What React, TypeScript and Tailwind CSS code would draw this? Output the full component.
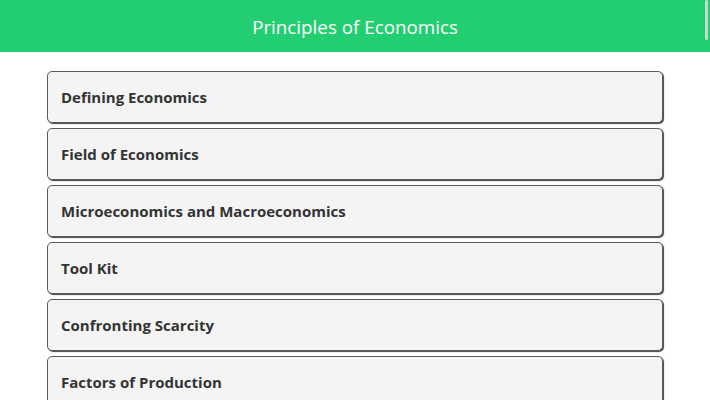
const topics = [
  "Defining Economics",
  "Field of Economics",
  "Microeconomics and Macroeconomics",
  "Tool Kit",
  "Confronting Scarcity",
  "Factors of Production",
];

export default function App() {
  return (
    <div className="relative h-[400px] overflow-hidden bg-white font-['Open_Sans',sans-serif]">
      <header className="flex h-[52px] items-center justify-center bg-[#23cd72] pt-[2px]">
        <h1 className="text-[18.8px] text-white">Principles of Economics</h1>
      </header>
      <div className="absolute right-[2px] top-0 h-[40px] w-[3px] rounded-full bg-[#c8d8cf]" />

      <ul className="mx-auto mt-[19px] flex w-[616px] flex-col gap-[5px]">
        {topics.map((t) => (
          <li
            key={t}
            className="flex h-[52px] shrink-0 items-center rounded-[5px] border border-[#5a5a5a] bg-[#f4f4f4] px-[13px] text-[15px] font-bold text-[#333] shadow-[1px_1px_1px_#444]"
          >
            {t}
          </li>
        ))}
      </ul>
    </div>
  );
}
